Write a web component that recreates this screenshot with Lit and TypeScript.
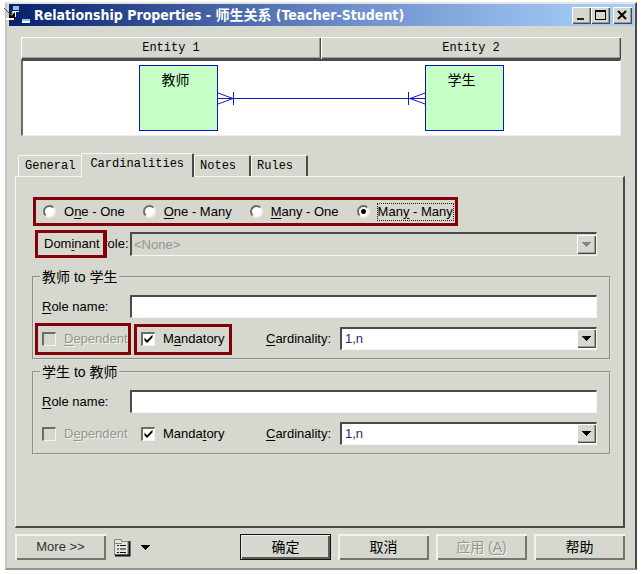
import { LitElement, html, css, svg, nothing } from "lit";
import { customElement, state } from "lit/decorators.js";

interface Side {
  id: string;
  title: string;
  dependent: unknown;
  mandatory: unknown;
  marked: boolean;
}

@customElement("app-root")
export class AppRoot extends LitElement {
  static styles = css`
    :host {
      display: block;
      box-sizing: border-box;
      padding: 2px 5px 4px;
      background: #fff;
      color: #000;
      font: 13px/16px "Liberation Sans", "Noto Sans CJK SC", sans-serif;
      --face: #d6d7ce;
      --dark: #4a4b46;
      --red: #840008;
    }
    * {
      box-sizing: border-box;
    }
    button,
    input,
    select {
      font: inherit;
      color: inherit;
      margin: 0;
      border-radius: 0;
      appearance: none;
    }
    button {
      padding: 0;
      background: var(--face);
      border: 0;
    }
    u {
      text-underline-offset: 2px;
    }
    .window {
      background: var(--face);
      border: 2px solid;
      border-color: #e4e5de var(--dark) #94958e #c6c7c0;
      padding-bottom: 8px;
    }
    .titlebar {
      display: flex;
      align-items: center;
      height: 22px;
      margin: 0 1px 0 2px;
      padding-right: 2px;
      background: linear-gradient(90deg, #08206c, #6d8fcb 55%, #a5cbf7 94%);
      color: #fff;
    }
    .titlebar svg {
      flex: none;
      overflow: visible;
    }
    .titlebar h1 {
      flex: 1;
      margin: 0 0 0 2px;
      font: bold 14px/20px "DejaVu Sans Condensed", "DejaVu Sans", "Noto Sans CJK SC", sans-serif;
      white-space: nowrap;
      overflow: hidden;
    }
    .caption {
      display: flex;
      color: #000;
    }
    .caption button {
      width: 19px;
      height: 17px;
      display: grid;
      place-items: center;
    }
    .caption .close {
      margin-left: 3px;
    }
    .raised {
      box-shadow: inset 1px 1px #fff, inset -1px -1px var(--dark), inset -2px -2px #9c9d94;
    }
    .preview {
      margin: 11px 14px 0;
    }
    .heads {
      display: grid;
      grid-template-columns: 1fr 1fr;
    }
    .heads button {
      height: 22px;
      font: 12px/20px "Liberation Mono", monospace;
    }
    .diagram {
      display: flex;
      align-items: center;
      height: 77px;
      padding: 0 116px;
      background: #fff;
      border: 1px solid;
      border-color: #4a4b46 #eee #eee #6b6c66;
      border-top-width: 2px;
      border-left-width: 2px;
    }
    .entity {
      width: 79px;
      height: 66px;
      padding-top: 6px;
      background: #c6ffc6;
      border: 1px solid #1010c8;
      text-align: center;
      font-size: 14px;
    }
    .entity span {
      padding-right: 6px;
    }
    .link {
      flex: 1;
      display: flex;
      align-items: center;
      color: #1818c0;
    }
    .link::before {
      content: "";
      order: 1;
      flex: 1;
      height: 1px;
      background: currentColor;
    }
    .link .end {
      order: 2;
    }
    .tabs {
      display: flex;
      align-items: flex-end;
      margin: 17px 0 0 11px;
      font: 12px/16px "Liberation Mono", monospace;
    }
    .tab {
      height: 21px;
      padding: 0 6px;
      border-top: 1px solid #f6f6f2;
      border-left: 1px solid #f6f6f2;
      border-radius: 2px 2px 0 0;
      text-align: left;
    }
    .tab.ended {
      padding: 0 13px 0 5px;
      border-right: 2px solid var(--dark);
    }
    .tab.active {
      position: relative;
      height: 24px;
      margin-bottom: -1px;
      padding: 0 8px 3px;
      border-right: 2px solid var(--dark);
    }
    .panel {
      margin: 0 10px 0 8px;
      padding: 20px 12px 71px 16px;
      border: 1px solid;
      border-color: #f6f6f2 var(--dark) var(--dark) #f6f6f2;
      border-right-width: 2px;
      border-bottom-width: 2px;
    }
    .radios {
      display: flex;
      gap: 18px;
      width: fit-content;
      height: 29px;
      margin-left: 1px;
      padding: 0 2px 0 7px;
      align-items: center;
      border: 3px solid var(--red);
      white-space: nowrap;
    }
    .choice {
      position: relative;
      display: flex;
      align-items: center;
      width: fit-content;
      gap: 8px;
    }
    .choice.off {
      color: #94958e;
      text-shadow: 1px 1px #f2f2ee;
    }
    .radio {
      width: 13px;
      height: 13px;
      border-radius: 50%;
      background: #fff;
      border: 2px solid;
      border-color: #6b6c66 #f0f0ea #f0f0ea #6b6c66;
    }
    .radio:checked {
      background: radial-gradient(circle, #000 2px, #fff 3px);
    }
    .radio:checked + span {
      outline: 1px dotted #222;
    }
    .check {
      display: block;
      width: 14px;
      height: 14px;
      background: #fff;
      border: 1px solid;
      border-color: #6b6c66 #f4f4f0 #f4f4f0 #6b6c66;
      border-top-width: 2px;
      border-left-width: 2px;
    }
    .check:disabled {
      background: var(--face);
    }
    .box {
      display: grid;
    }
    .box > * {
      grid-area: 1 / 1;
    }
    .box svg {
      z-index: 1;
      pointer-events: none;
    }
    .mark {
      position: absolute;
      border: 3px solid var(--red);
      pointer-events: none;
    }
    .mark.dominant {
      inset: -2px auto -2px 3px;
      width: 72px;
      border-right-width: 4px;
    }
    .mark.dependent {
      inset: -8px -3px -8px -7px;
    }
    .mark.mandatory {
      inset: -7px -8px -8px -7px;
    }
    .row {
      position: relative;
      display: grid;
      align-items: center;
    }
    .dominant-row {
      grid-template-columns: 98px 1fr;
      margin-top: 6px;
      padding-right: 14px;
    }
    .dominant-row label {
      padding-left: 12px;
      white-space: nowrap;
    }
    .name-row {
      grid-template-columns: 88px 1fr;
    }
    .card-row {
      grid-template-columns: 99px 125px 74px 1fr;
      margin-top: 9px;
    }
    .field {
      width: 100%;
      height: 23px;
      padding: 0 4px;
      background: #fff;
      border: 1px solid;
      border-color: var(--dark) #f6f6f2 #f6f6f2 var(--dark);
      border-top-width: 2px;
      border-left-width: 2px;
      outline: 0;
    }
    .combo {
      display: grid;
      align-items: center;
    }
    .combo > * {
      grid-area: 1 / 1;
    }
    .combo .field {
      padding: 0 3px;
      color: #4a1868;
      opacity: 1;
    }
    .combo .field:disabled {
      height: 24px;
      padding: 0 2px;
      background: var(--face);
      color: #94958e;
    }
    .drop {
      justify-self: end;
      display: grid;
      place-items: center;
      width: 19px;
      height: 19px;
      margin-right: 1px;
      background: var(--face);
      pointer-events: none;
    }
    .drop.off {
      color: #84857c;
    }
    fieldset {
      min-width: 0;
      margin: 13px 0 0;
      padding: 10px 12px 8px 8px;
      border: 2px groove #e0e1da;
    }
    fieldset + fieldset {
      margin-top: 4px;
    }
    legend {
      padding: 0 2px;
      margin-left: -2px;
      height: 16px;
    }
    .cjk {
      font-size: 14px;
    }
    .footer {
      display: flex;
      align-items: center;
      gap: 7px;
      margin: 6px 10px 0 8px;
    }
    .push {
      width: 91px;
      height: 26px;
      box-shadow: inset 2px 2px #f2f2ee, inset -2px -2px #74756e;
    }
    .push.more {
      color: #333;
    }
    .push.default {
      border: 1px solid #111;
      box-shadow: inset 1px 1px #f2f2ee, inset -2px -2px #5a5b56;
    }
    .push.zh {
      font-size: 14px;
    }
    .push:disabled {
      color: #94958e;
      text-shadow: 1px 1px #f2f2ee;
    }
    .menu {
      display: flex;
      align-items: center;
      gap: 10px;
      margin-right: auto;
    }
  `;

  @state() private cardinality = 3;

  private sides: Side[] = [
    {
      id: "a",
      title: "教师 to 学生",
      dependent: html`<u>D</u>ependent`,
      mandatory: html`M<u>a</u>ndatory`,
      marked: true,
    },
    {
      id: "b",
      title: "学生 to 教师",
      dependent: html`D<u>e</u>pendent`,
      mandatory: html`Manda<u>t</u>ory`,
      marked: false,
    },
  ];

  private modes = [
    html`O<u>n</u>e - One`,
    html`<u>O</u>ne - Many`,
    html`<u>M</u>any - One`,
    html`Man<u>y</u> - Many`,
  ];

  private arrow() {
    return html`<svg width="9" height="5" viewBox="0 0 9 5" shape-rendering="crispEdges">
      <path d="M0 0H9L5 5H4Z" fill="currentColor" />
    </svg>`;
  }

  private foot(end: boolean) {
    const shape = end
      ? svg`<path d="M0 6.500H17M2 6.500L17 1M2 6.500L17 12M.500 0V13" />`
      : svg`<path d="M0 6.500H17M15 6.500L0 1M15 6.500L0 12M15.500 0V13" />`;
    return html`<svg class=${end ? "end" : "start"} width="17" height="13" viewBox="0 0 17 13"
      fill="none" stroke="currentColor">${shape}</svg>`;
  }

  private side(s: Side) {
    return html`<fieldset>
      <legend class="cjk">${s.title}</legend>
      <div class="row name-row">
        <label for="role-${s.id}"><u>R</u>ole name:</label>
        <input class="field" id="role-${s.id}" type="text" />
      </div>
      <div class="row card-row">
        <label class="choice off">
          <input class="check" type="checkbox" disabled />
          <span>${s.dependent}</span>
          ${s.marked ? html`<span class="mark dependent"></span>` : nothing}
        </label>
        <label class="choice">
          <span class="box">
            <input class="check" type="checkbox" checked />
            <svg width="14" height="14" viewBox="0 0 14 14">
              <path d="M3.500 5.500V8.500L6 11L11.500 5.500V2.800L6 8.200Z" fill="#000" />
            </svg>
          </span>
          <span>${s.mandatory}</span>
          ${s.marked ? html`<span class="mark mandatory"></span>` : nothing}
        </label>
        <label for="card-${s.id}"><u>C</u>ardinality:</label>
        <div class="combo">
          <select class="field" id="card-${s.id}">
            <option>1,n</option>
          </select>
          <span class="drop raised">${this.arrow()}</span>
        </div>
      </div>
    </fieldset>`;
  }

  render() {
    return html`<main class="window">
      <header class="titlebar">
        <svg width="23" height="20" viewBox="0 0 23 20">
          <path d="M4 1H10V5H4Z" fill="#8cc8d4" />
          <path d="M3 6H10V7H7V12H5V15H0V9H3Z" fill="#fff" />
          <path d="M0 7L3 10L6 7V14H0Z" fill="#000" />
          <path d="M-5 3L3 11M3 5V11.500" stroke="#555" fill="none" />
          <path d="M-3 14H5" stroke="#fff" stroke-width="2" />
          <path d="M13 14H21V16H13Z" fill="#8cc8d4" />
          <path d="M13 16H21V18H13Z" fill="#fff" />
        </svg>
        <h1>Relationship Properties - 师生关系 (Teacher-Student)</h1>
        <div class="caption">
          <button class="raised" aria-label="Minimize">
            <svg width="13" height="11" viewBox="0 0 13 11"><path d="M2 8H9V10H2Z" fill="#222" /></svg>
          </button>
          <button class="raised" aria-label="Maximize">
            <svg width="13" height="11" viewBox="0 0 13 11">
              <path d="M1 0H12V10H1ZM2 2V9H11V2Z" fill-rule="evenodd" />
            </svg>
          </button>
          <button class="raised close" aria-label="Close">
            <svg width="11" height="10" viewBox="0 0 11 10">
              <path d="M1 1L9 9M9 1L1 9" stroke="#000" stroke-width="2" />
            </svg>
          </button>
        </div>
      </header>

      <section class="preview">
        <div class="heads">
          <button class="raised">Entity 1</button>
          <button class="raised">Entity 2</button>
        </div>
        <div class="diagram">
          <div class="entity"><span>教师</span></div>
          <div class="link">${this.foot(false)}${this.foot(true)}</div>
          <div class="entity"><span>学生</span></div>
        </div>
      </section>

      <nav class="tabs" role="tablist">
        <button class="tab" role="tab">General</button>
        <button class="tab active" role="tab" aria-selected="true">Cardinalities</button>
        <button class="tab ended" role="tab">Notes</button>
        <button class="tab ended" role="tab">Rules</button>
      </nav>

      <section class="panel" role="tabpanel">
        <div class="radios" role="radiogroup">
          ${this.modes.map(
            (m, i) => html`<label class="choice">
              <input
                class="radio"
                type="radio"
                name="mode"
                .checked=${this.cardinality === i}
                @change=${() => (this.cardinality = i)}
              />
              <span>${m}</span>
            </label>`
          )}
        </div>
        <div class="row dominant-row">
          <label for="dominant">Dom<u>i</u>nant role:</label>
          <span class="mark dominant"></span>
          <div class="combo">
            <select class="field" id="dominant" disabled>
              <option>&lt;None&gt;</option>
            </select>
            <span class="drop off raised">${this.arrow()}</span>
          </div>
        </div>
        ${this.sides.map((s) => this.side(s))}
      </section>

      <footer class="footer">
        <button class="push more">More &gt;&gt;</button>
        <button class="menu" aria-label="Report">
          <svg width="18" height="19" viewBox="0 0 18 19" fill="none">
            <path d="M1.500 17V1.500H8.500V3.500H15V17Z" fill="#e4e5de" stroke="#84857c" />
            <path d="M2 17.500H16.500V3" stroke="#111" stroke-width="2" />
            <path d="M1 5.500H9" stroke="#84857c" />
            <path d="M4 7.500H6M4 11H6M4 14.500H6M7 7.500H13M7 11H13M7 14.500H13" stroke="#111" />
          </svg>
          ${this.arrow()}
        </button>
        <button class="push default zh">确定</button>
        <button class="push zh">取消</button>
        <button class="push zh" disabled>应用 (<u>A</u>)</button>
        <button class="push zh">帮助</button>
      </footer>
    </main>`;
  }
}
